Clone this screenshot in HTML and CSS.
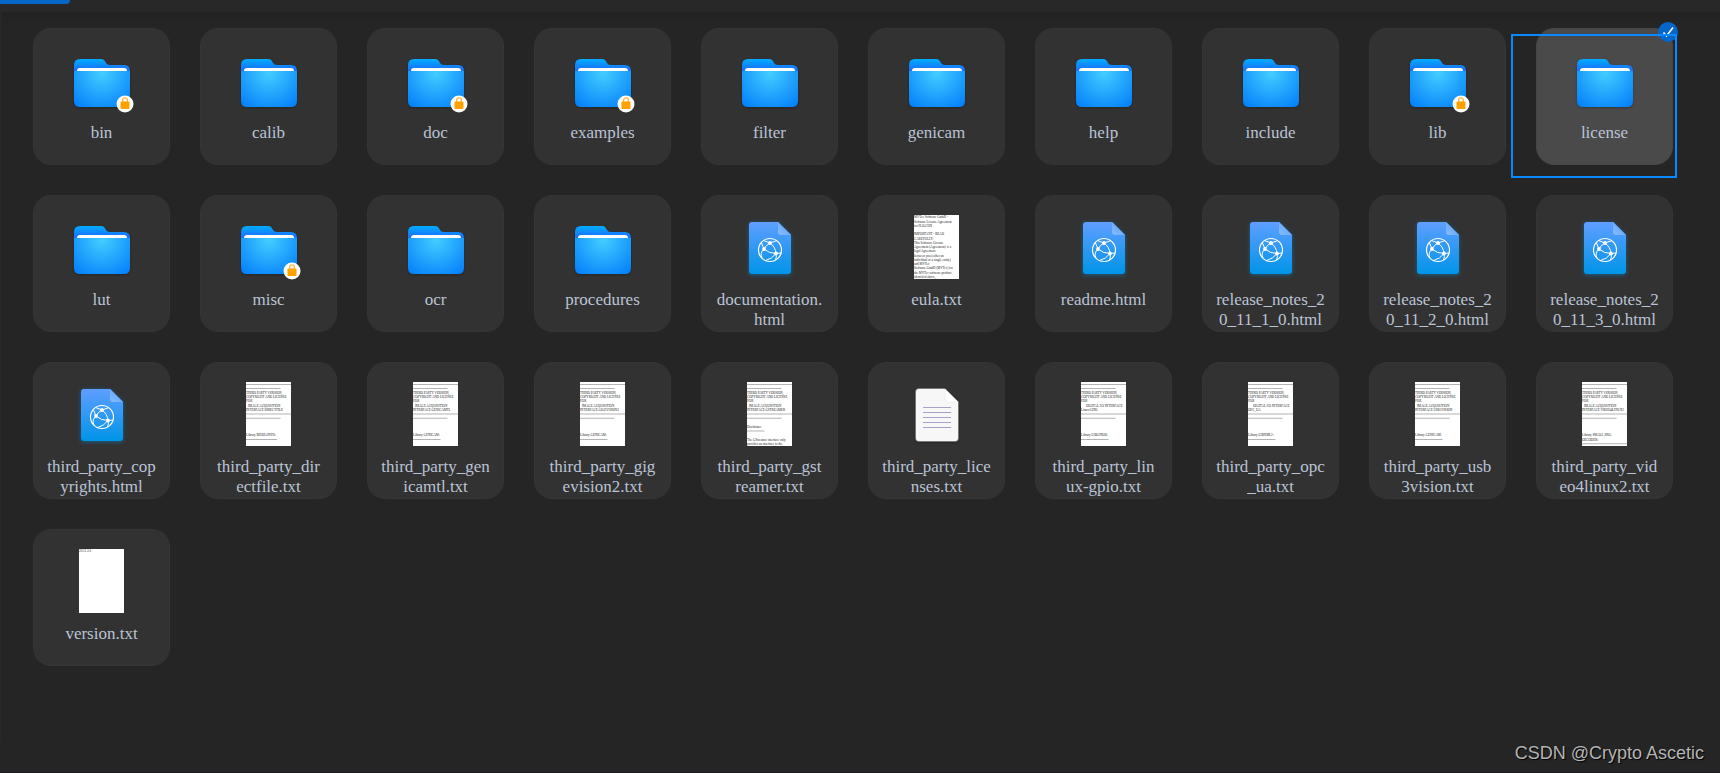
FILE: index.html
```html
<!DOCTYPE html>
<html lang="en">
<head>
<meta charset="utf-8">
<title>File manager</title>
<link rel="stylesheet" href="styles.css">
</head>
<body>
<svg class="sprites" aria-hidden="true">
  <defs>
    <radialGradient id="front" gradientUnits="userSpaceOnUse" cx="32" cy="25" r="42">
      <stop offset="0" stop-color="#43cdff"/><stop offset="1" stop-color="#0480fb"/>
    </radialGradient>
    <linearGradient id="back" x1="0" y1="0" x2="0" y2="1">
      <stop offset="0" stop-color="#02adff"/><stop offset="0.25" stop-color="#1872fb"/><stop offset="1" stop-color="#1872fb"/>
    </linearGradient>
    <linearGradient id="sheet" x1="0" y1="0" x2="0" y2="1">
      <stop offset="0" stop-color="#5f9eff"/><stop offset="1" stop-color="#0094e8"/>
    </linearGradient>
    <linearGradient id="fold" x1="0" y1="1" x2="1" y2="0">
      <stop offset="0" stop-color="#85bdff"/><stop offset="1" stop-color="#5a9cf8"/>
    </linearGradient>
    <symbol id="folder" viewBox="0 0 64 64">
      <path fill="url(#back)" d="M10 11H31C34 11 35 13 36 15Q37 17 40 17H54Q60 17 60 23V53H4V17Q4 11 10 11Z"/>
      <path fill="#fff" d="M7 24V23Q7 20 10 20H54Q57 20 57 23V24Z"/>
      <path fill="url(#front)" d="M4 23H60V53Q60 59 54 59H10Q4 59 4 53Z"/>
    </symbol>
    <symbol id="lock" viewBox="0 0 18 18">
      <circle cx="9" cy="9" r="8.5" fill="#fff"/>
      <path d="M6.7 7V4.8Q6.7 2.8 9 2.8T11.3 4.8V7" fill="none" stroke="#ffb43c" stroke-width="1.3"/>
      <rect x="4.5" y="6.5" width="9" height="7.5" rx="1" fill="#ffa200"/>
    </symbol>
    <symbol id="html" viewBox="0 0 64 64">
      <path fill="url(#sheet)" d="M14 7H40L53 20V56Q53 59 50 59H14Q11 59 11 56V10Q11 7 14 7Z"/>
      <path fill="url(#fold)" d="M40 7L53 20H43Q40 20 40 17Z"/>
      <g fill="none" stroke="#fff" stroke-width="1">
        <circle cx="32" cy="35" r="11.5" stroke-width="1.2"/>
        <path d="M25.500 25.500L32 28L39 25.500M32 28Q28 30 26 34Q21.500 38 24 43M32 28Q37.500 32 38 38.500Q34 44 27.500 45.500M26 34Q31 38.500 38 38.500M26 34L23.500 28M38 38.500L43.500 38M38 38.500Q39 42 37.500 45"/>
      </g>
      <g fill="#fff"><circle cx="32" cy="28" r="1.900"/><circle cx="26" cy="34" r="1.900"/><circle cx="38" cy="38.500" r="1.900"/></g>
    </symbol>
    <symbol id="text" viewBox="0 0 64 64">
      <path fill="#f7f7f7" stroke="#666" stroke-width="0.6" d="M14 6.500H40L53.500 20V56Q53.500 59.500 50 59.500H14Q10.500 59.500 10.500 56V10Q10.500 6.500 14 6.500Z"/>
      <path fill="#fff" stroke="#e6e6e6" stroke-width="0.5" d="M40 7L53 20H43Q40 20 40 17Z"/>
      <path stroke="#a8a3c8" d="M18 25.500H46M18 30.500H46M18 35.500H46M18 40.500H46M18 45.500H46"/>
    </symbol>
    <symbol id="notice" viewBox="0 0 180 256">
      <path class="rule" d="M0 10H180M0 26H138M0 128H180M0 145H138"/>
      <text y="47">THIRD PARTY VERSION,</text>
      <text y="64">COPYRIGHT AND LICENSE</text>
      <text y="81">FOR</text>
    </symbol>
  </defs>
</svg>

<header class="toolbar"><div class="tab"></div></header>

<main class="content">
<ul class="files">
  <li><button class="file"><span class="icon"><svg class="glyph"><use href="#folder"/></svg><svg class="lock"><use href="#lock"/></svg></span><span class="name">bin</span></button></li>
  <li><button class="file"><span class="icon"><svg class="glyph"><use href="#folder"/></svg></span><span class="name">calib</span></button></li>
  <li><button class="file"><span class="icon"><svg class="glyph"><use href="#folder"/></svg><svg class="lock"><use href="#lock"/></svg></span><span class="name">doc</span></button></li>
  <li><button class="file"><span class="icon"><svg class="glyph"><use href="#folder"/></svg><svg class="lock"><use href="#lock"/></svg></span><span class="name">examples</span></button></li>
  <li><button class="file"><span class="icon"><svg class="glyph"><use href="#folder"/></svg></span><span class="name">filter</span></button></li>
  <li><button class="file"><span class="icon"><svg class="glyph"><use href="#folder"/></svg></span><span class="name">genicam</span></button></li>
  <li><button class="file"><span class="icon"><svg class="glyph"><use href="#folder"/></svg></span><span class="name">help</span></button></li>
  <li><button class="file"><span class="icon"><svg class="glyph"><use href="#folder"/></svg></span><span class="name">include</span></button></li>
  <li><button class="file"><span class="icon"><svg class="glyph"><use href="#folder"/></svg><svg class="lock"><use href="#lock"/></svg></span><span class="name">lib</span></button></li>
  <li class="picked"><button class="file selected" aria-pressed="true"><span class="icon"><svg class="glyph"><use href="#folder"/></svg></span><span class="name">license</span></button>
    <svg class="check" viewBox="0 0 20 20"><circle cx="10" cy="10" r="10" fill="#0566c8"/><path d="M5.500 10.500L8.500 14L15 5.500" fill="none" stroke="#fff" stroke-width="1.600"/></svg>
    <span class="marquee"></span></li>

  <li><button class="file"><span class="icon"><svg class="glyph"><use href="#folder"/></svg></span><span class="name">lut</span></button></li>
  <li><button class="file"><span class="icon"><svg class="glyph"><use href="#folder"/></svg><svg class="lock"><use href="#lock"/></svg></span><span class="name">misc</span></button></li>
  <li><button class="file"><span class="icon"><svg class="glyph"><use href="#folder"/></svg></span><span class="name">ocr</span></button></li>
  <li><button class="file"><span class="icon"><svg class="glyph"><use href="#folder"/></svg></span><span class="name">procedures</span></button></li>
  <li><button class="file"><span class="icon"><svg class="glyph web"><use href="#html"/></svg></span><span class="name">documentation.<wbr>html</span></button></li>
  <li><button class="file"><span class="icon"><svg class="thumb" viewBox="0 0 180 256">
    <text y="13">MVTec Software GmbH -</text><text y="30">Software License Agreement</text><text y="47">for HALCON</text><text y="81">IMPORTANT - READ</text><text y="98">CAREFULLY:</text><text y="115">This Software License</text><text y="132">Agreement (Agreement) is a</text><text y="149">legal Agreement</text><text y="166">between you (either an</text><text y="183">individual or a single entity)</text><text y="200">and MVTec</text><text y="217">Software GmbH (MVTec) for</text><text y="234">the MVTec software product</text><text y="251">identified above,</text></svg></span><span class="name">eula.txt</span></button></li>
  <li><button class="file"><span class="icon"><svg class="glyph web"><use href="#html"/></svg></span><span class="name">readme.html</span></button></li>
  <li><button class="file"><span class="icon"><svg class="glyph web"><use href="#html"/></svg></span><span class="name">release_notes_2<wbr>0_11_1_0.html</span></button></li>
  <li><button class="file"><span class="icon"><svg class="glyph web"><use href="#html"/></svg></span><span class="name">release_notes_2<wbr>0_11_2_0.html</span></button></li>
  <li><button class="file"><span class="icon"><svg class="glyph web"><use href="#html"/></svg></span><span class="name">release_notes_2<wbr>0_11_3_0.html</span></button></li>

  <li><button class="file"><span class="icon"><svg class="glyph web"><use href="#html"/></svg></span><span class="name">third_party_cop<wbr>yrights.html</span></button></li>
  <li><button class="file"><span class="icon"><svg class="thumb" viewBox="0 0 180 256"><use href="#notice"/><text x="8" y="98">IMAGE ACQUISITION</text><text y="115">INTERFACE DIRECTFILE</text><text y="217">Library MEDIAINFO:</text><path class="rule" d="M0 230H124"/></svg></span><span class="name">third_party_dir<wbr>ectfile.txt</span></button></li>
  <li><button class="file"><span class="icon"><svg class="thumb" viewBox="0 0 180 256"><use href="#notice"/><text x="8" y="98">IMAGE ACQUISITION</text><text y="115">INTERFACE GENICAMTL</text><text y="217">Library GENICAM:</text><path class="rule" d="M0 230H110"/></svg></span><span class="name">third_party_gen<wbr>icamtl.txt</span></button></li>
  <li><button class="file"><span class="icon"><svg class="thumb" viewBox="0 0 180 256"><use href="#notice"/><text x="8" y="98">IMAGE ACQUISITION</text><text y="115">INTERFACE GIGEVISION2</text><text y="217">Library GENICAM:</text><path class="rule" d="M0 230H110"/></svg></span><span class="name">third_party_gig<wbr>evision2.txt</span></button></li>
  <li><button class="file"><span class="icon"><svg class="thumb" viewBox="0 0 180 256"><use href="#notice"/><text x="8" y="98">IMAGE ACQUISITION</text><text y="115">INTERFACE GSTREAMER</text><text y="183">Disclaimer</text><path class="rule" d="M0 196H70"/><text y="234">The GStreamer interface only</text><text y="251">provides an interface to the</text></svg></span><span class="name">third_party_gst<wbr>reamer.txt</span></button></li>
  <li><button class="file"><span class="icon"><svg class="glyph"><use href="#text"/></svg></span><span class="name">third_party_lice<wbr>nses.txt</span></button></li>
  <li><button class="file"><span class="icon"><svg class="thumb" viewBox="0 0 180 256"><use href="#notice"/><text x="20" y="98">DIGITAL I/O INTERFACE</text><text y="115">Linux-GPIO</text><text y="217">Library LIBGPIOD:</text><path class="rule" d="M0 230H110"/></svg></span><span class="name">third_party_lin<wbr>ux-gpio.txt</span></button></li>
  <li><button class="file"><span class="icon"><svg class="thumb" viewBox="0 0 180 256"><use href="#notice"/><text x="20" y="98">DIGITAL I/O INTERFACE</text><text y="115">OPC_UA</text><text y="217">Library LIBXML2:</text><path class="rule" d="M0 230H110"/></svg></span><span class="name">third_party_opc<wbr>_ua.txt</span></button></li>
  <li><button class="file"><span class="icon"><svg class="thumb" viewBox="0 0 180 256"><use href="#notice"/><text x="8" y="98">IMAGE ACQUISITION</text><text y="115">INTERFACE USB3VISION</text><text y="217">Library GENICAM:</text><path class="rule" d="M0 230H110"/></svg></span><span class="name">third_party_usb<wbr>3vision.txt</span></button></li>
  <li><button class="file"><span class="icon"><svg class="thumb" viewBox="0 0 180 256"><use href="#notice"/><text x="8" y="98">IMAGE ACQUISITION</text><text y="115">INTERFACE VIDEO4LINUX2</text><text y="217">Library SMALL JPEG</text><text y="234">DECODER:</text><path class="rule" d="M0 247H180"/></svg></span><span class="name">third_party_vid<wbr>eo4linux2.txt</span></button></li>

  <li><button class="file"><span class="icon"><svg class="thumb" viewBox="0 0 180 256"><text y="13">20.11.3.0</text></svg></span><span class="name">version.txt</span></button></li>
</ul>
</main>
<footer class="credit">CSDN @Crypto Ascetic</footer>
</body>
</html>
```

FILE: styles.css
```css
* { box-sizing: border-box; }

body {
  margin: 0;
  min-height: 100vh;
  display: flex;
  flex-direction: column;
  background: #252525;
  border-bottom: 1px solid #1d181c;
  font-family: "Liberation Serif", serif;
}

.sprites { position: absolute; width: 0; height: 0; }

.toolbar { height: 12px; background: #282828; }

.tab {
  width: 70px;
  height: 4px;
  background: #0566c8;
  border-bottom-right-radius: 6px;
}

.content {
  flex: 1;
  padding: 16px 34px 30px 32px;
  border-left: 1px solid #292929;
  background: linear-gradient(#222222, #252525 16px);
}

.files {
  display: grid;
  grid-template-columns: repeat(auto-fill, 137px);
  gap: 30px;
  margin: 0;
  padding: 0;
  list-style: none;
}

.file {
  display: flex;
  flex-direction: column;
  align-items: center;
  gap: 11px;
  width: 100%;
  height: 137px;
  padding: 19px 0 0;
  border: 1px solid #353535;
  border-radius: 18px;
  background: #323232;
  color: #bac3d5;
  font: 17px/20px "Liberation Serif", serif;
  text-align: center;
}

.file.selected { background: #4a4a4a; border-color: #464646; }

.icon { position: relative; width: 65px; height: 64px; }

.glyph {
  display: block;
  width: 64px;
  height: 64px;
  margin-left: 1px;
  filter: drop-shadow(0 1px 1px #00000040);
}

.glyph.web { filter: drop-shadow(0 1px 2px #0094e880); }

.thumb {
  display: block;
  width: 45px;
  height: 64px;
  margin: 0 auto;
  background: #fff;
  font-size: 13px;
  fill: #222;
}

.rule { stroke: #999; stroke-width: 3px; }

.lock { position: absolute; left: 47px; top: 47px; width: 18px; height: 18px; }

.name { display: block; width: 113px; }

.picked { position: relative; }

.marquee {
  position: absolute;
  left: -25px;
  top: 6px;
  width: 166px;
  height: 144px;
  border: 2px solid #0a88ff;
}

.check { position: absolute; right: -5px; top: -6px; width: 20px; height: 20px; }

.credit {
  padding: 0 16px 7px;
  color: #b4b4b4;
  font: 18px/24px "Liberation Sans", sans-serif;
  text-align: right;
  text-shadow: 1px 1px 1px #000;
}
```
